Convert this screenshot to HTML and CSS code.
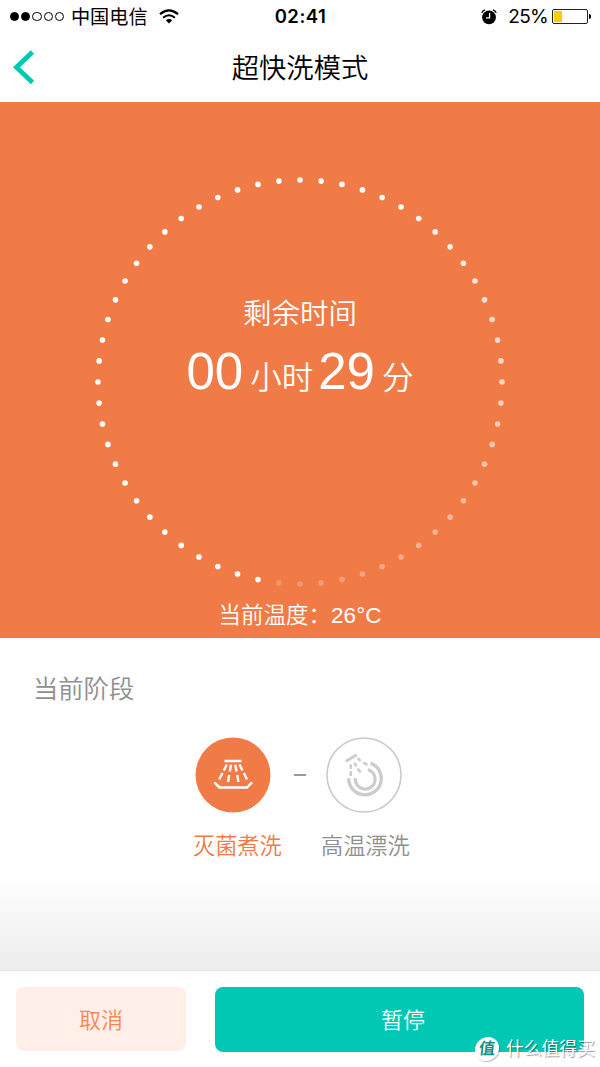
FILE: index.html
```html
<!DOCTYPE html>
<html lang="zh-CN">
<head>
    <meta charset="UTF-8">
    <meta name="viewport" content="width=device-width, initial-scale=1.0">
    <title>超快洗模式</title>
    <link rel="stylesheet" href="styles.css">
</head>
<body>
    <div class="status-bar">
        <div class="status-left">
            <div class="signal">
                <i class="on"></i><i class="on"></i><i></i><i></i><i></i>
            </div>
            <span class="carrier">中国电信</span>
            <svg class="wifi" width="20" height="15" viewBox="0 0 20 15">
                <path d="M1 5.2Q10-2.6 19 5.2" fill="none" stroke="#000" stroke-width="2.2"/>
                <path d="M4.1 8.7Q10 3.8 15.9 8.7" fill="none" stroke="#000" stroke-width="2.1"/>
                <path d="M6.8 11.3Q10 8.6 13.2 11.3L10 14.4Z"/>
            </svg>
        </div>
        <span class="clock">02:41</span>
        <div class="status-right">
            <svg class="alarm" width="16" height="16" viewBox="0 0 16 16">
                <circle cx="8" cy="8.3" r="6.9"/>
                <path d="M.8 3.9Q1.6 1.5 4 .9M12 .9Q14.4 1.5 15.2 3.9" fill="none" stroke="#000" stroke-width="1.3"/>
                <path d="M8.6 4V8.8H5" fill="none" stroke="#fff" stroke-width="1.3"/>
            </svg>
            <span class="percent">25%</span>
            <div class="battery"><i></i></div>
        </div>
    </div>

    <div class="navbar">
        <svg class="back" width="24" height="36" viewBox="0 0 24 36">
            <path d="M20.5 3L4.5 18.3L20.5 33.5" fill="none" stroke="#00c8b4" stroke-width="4.8"/>
        </svg>
        <h1>超快洗模式</h1>
    </div>

    <div class="timer">
        <svg class="ring" id="ring" width="412" height="412" viewBox="0 0 412 412"></svg>
        <div class="remain">
            <p class="remain-label">剩余时间</p>
            <p class="remain-time"><b>00</b><span class="hour">小时</span><b>29</b><span class="minute">分</span></p>
        </div>
        <p class="temp">当前温度：<span>26°C</span></p>
    </div>

    <div class="stage">
        <h2>当前阶段</h2>
        <div class="steps">
            <div class="step active">
                <svg width="76" height="76" viewBox="0 0 76 76">
                    <circle cx="38" cy="38" r="37.5" fill="#f07b46"/>
                    <g fill="none" stroke="#fff">
                        <path d="M29.5 24H46.5" stroke-width="2.5"/>
                        <path d="M31.8 27.5L28.8 33.5M27.5 36L24.2 42.5M36 27.8L34.8 34.5M34.2 38L33 45M40.3 27.8L41.5 34.5M42.2 38L43.4 45M44.5 27.5L47.5 33.5M48.8 36L52 42.5" stroke-width="2.4"/>
                        <path d="M19.3 45.3L24.5 50.5H52L57 45.3" stroke-width="2.5"/>
                    </g>
                </svg>
                <span>灭菌煮洗</span>
            </div>
            <i class="dash"></i>
            <div class="step">
                <svg width="76" height="76" viewBox="0 0 76 76">
                    <circle cx="38" cy="38" r="37" fill="#fff" stroke="#c8c8c8" stroke-width="1.5"/>
                    <g fill="none" stroke="#ccc">
                        <path d="M19.8 24.2L30.8 17.8" stroke-width="3"/>
                        <path d="M31.6 21.3L34.7 24M37.2 25.3L41.4 28M28.3 25.8L30.4 29.2M31.6 31.6L34.7 35.4M24.8 27.4L24.7 32M24.7 34.3L24.8 39" stroke-width="2.6"/>
                        <path d="M44.6 26.2A16.3 16.3 0 1 1 22.7 41.2" stroke-width="3.4"/>
                        <path d="M42 32.5A10 10 0 1 1 29.2 41.2" stroke-width="3.2"/>
                    </g>
                </svg>
                <span>高温漂洗</span>
            </div>
        </div>
    </div>

    <div class="actions">
        <button class="cancel">取消</button>
        <button class="pause">暂停</button>
    </div>

    <div class="watermark"><i>值</i><span>什么值得买</span></div>

    <script>
        const ring = document.getElementById('ring');
        const total = 60;
        const faded = 31;

        for (let i = 0; i < total; i++) {
            const angle = i * 2 * Math.PI / total;
            const dot = document.createElementNS('http://www.w3.org/2000/svg', 'circle');
            dot.setAttribute('cx', 206 + 202 * Math.sin(angle));
            dot.setAttribute('cy', 206 - 202 * Math.cos(angle));
            dot.setAttribute('r', 2.8);
            dot.setAttribute('fill', '#fff');
            // pontos já decorridos perdem opacidade
            dot.setAttribute('fill-opacity', i <= faded ? Math.min(1, 1.12 - i * 0.03) : 1);
            ring.appendChild(dot);
        }
    </script>
</body>
</html>
```
FILE: styles.css
```css
* {
    box-sizing: border-box;
}

body {
    margin: 0;
    height: 1067px;
    position: relative;
    overflow: hidden;
    background-color: #fefefe;
    color: #000;
    font-family: "Liberation Sans", "Noto Sans CJK SC", sans-serif;
    font-weight: 350;
}

h1, h2, p {
    margin: 0;
    font-weight: 350;
}

/* Barra de status */
.status-bar {
    display: grid;
    grid-template-columns: 1fr auto 1fr;
    align-items: center;
    height: 32px;
    padding: 0 9px 0 10px;
    font-family: Inter, "Noto Sans CJK SC", sans-serif;
}

.status-left, .status-right {
    display: flex;
    align-items: center;
}

.status-right {
    justify-content: flex-end;
}

.signal {
    display: flex;
    gap: 2px;
}

.signal i {
    width: 9.2px;
    height: 9.2px;
    border: 1px solid #000;
    border-radius: 50%;
}

.signal .on {
    background-color: #000;
}

.carrier {
    margin-left: 7px;
    font-size: 19.2px;
    font-weight: 400;
    line-height: 32px;
    padding-top: 1px;
}

.wifi {
    margin: 0 0 1px 11px;
}

.clock {
    padding-bottom: 1px;
    font-size: 18.5px;
    font-weight: 600;
    letter-spacing: 0.5px;
}

.percent {
    margin: 0 4px 0 11px;
    font-size: 19px;
    font-weight: 400;
    letter-spacing: -0.7px;
}

.battery {
    position: relative;
    width: 36px;
    height: 15px;
    margin-right: 3px;
    padding: 1px;
    border: 1px solid #222;
    border-radius: 2px;
}

.battery i {
    display: block;
    width: 8px;
    height: 11px;
    background-color: #ffcc00;
}

.battery::after {
    content: "";
    position: absolute;
    right: -4px;
    top: 4px;
    width: 2px;
    height: 5px;
    background-color: #000;
    border-radius: 0 2px 2px 0;
}

/* Cabeçalho */
.navbar {
    display: grid;
    grid-template-columns: 60px 1fr 60px;
    align-items: center;
    height: 70px;
}

.back {
    margin-left: 12px;
}

.navbar h1 {
    padding-top: 3px;
    text-align: center;
    font-size: 27.3px;
    line-height: 67px;
}

/* Temporizador */
.timer {
    display: grid;
    grid-template-columns: 1fr;
    grid-template-rows: 489px 47px;
    justify-items: center;
    height: 536px;
    background-color: #f07b46;
    color: #fff;
}

.ring {
    grid-area: 1 / 1;
    margin-top: 74px;
}

.remain {
    grid-area: 1 / 1;
    padding-top: 191px;
    text-align: center;
}

.remain-label {
    font-size: 28.5px;
    line-height: 42px;
}

.remain-time {
    display: flex;
    align-items: baseline;
    height: 70px;
    margin-top: 2px;
    line-height: 70px;
    font-size: 31.5px;
}

.remain-time b {
    font-size: 51px;
    font-weight: normal;
}

.hour {
    margin: 0 5px 0 7px;
}

.minute {
    margin-left: 7px;
}

.temp {
    font-size: 22.5px;
    line-height: 50px;
}

.temp span {
    font-size: 22.5px;
}

/* Etapas */
.stage {
    height: 332px;
    padding-top: 31px;
    background: linear-gradient(#fefefe 73%, #ececec);
    color: #8f8f8f;
}

.stage h2 {
    padding-left: 33px;
    font-size: 25.3px;
    line-height: 40px;
}

.steps {
    display: flex;
    justify-content: center;
    margin-top: 28px;
    padding-left: 4px;
}

.step {
    display: flex;
    flex-direction: column;
    width: 90px;
}

.step svg {
    margin-left: 2px;
}

.step:last-child svg {
    margin-left: 5px;
}

.step span {
    margin-top: 17px;
    font-size: 22.2px;
    line-height: 33px;
    white-space: nowrap;
}

.active span {
    color: #f07b46;
}

.dash {
    width: 12px;
    height: 1.5px;
    margin: 37px 15px 0 11px;
    background-color: #999;
}

/* Botões */
.actions {
    display: flex;
    gap: 29px;
    height: 97px;
    padding: 16px 16px 0;
    border-top: 1px solid #e9e9e9;
}

.actions button {
    height: 64px;
    border: none;
    border-radius: 8px;
    padding: 0 0 3px;
    font-family: inherit;
    font-size: 22px;
    font-weight: 350;
    cursor: pointer;
}

.actions .cancel {
    width: 170px;
    background-color: #ffefe8;
    color: #ff8650;
}

.actions .pause {
    flex: 1;
    height: 65px;
    padding: 0 0 4px 7px;
    background-color: #00c8b4;
    color: #fff;
}

/* Marca d'água */
.watermark {
    position: absolute;
    left: 475px;
    top: 1037px;
    display: flex;
    align-items: center;
    gap: 7px;
    color: #fff;
    font-size: 17.8px;
    font-weight: 400;
    line-height: 24px;
    white-space: nowrap;
    text-shadow: 1px 1px 1px rgba(0, 0, 0, 0.4);
}

.watermark i {
    width: 24px;
    height: 24px;
    border-radius: 50%;
    background-color: #fff;
    box-shadow: 1px 1px 1px rgba(0, 0, 0, 0.25);
    color: #169284;
    font-size: 16px;
    font-style: normal;
    font-weight: bold;
    text-align: center;
    text-shadow: none;
    transform: skewX(-6deg);
}
```
